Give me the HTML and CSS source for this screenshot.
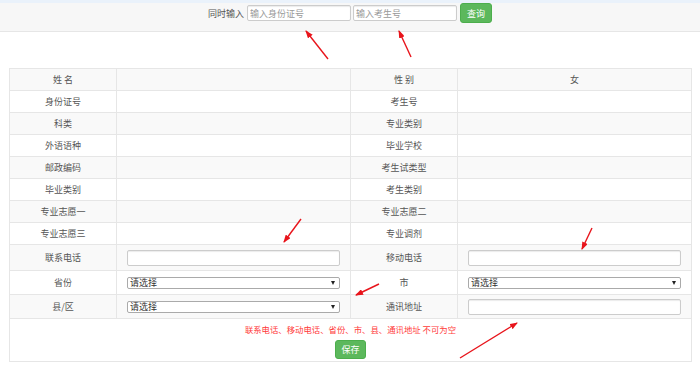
FILE: index.html
```html
<!DOCTYPE html>
<html lang="zh-CN">
<head>
    <meta charset="UTF-8">
    <meta name="viewport" content="width=device-width, initial-scale=1.0">
    <title>考生信息</title>
    <link rel="stylesheet" href="styles.css">
</head>
<body>

    <!-- Search Bar -->
    <div class="search-bar">
        <span class="search-label">同时输入</span>
        <input type="text" class="search-input" placeholder="输入身份证号">
        <input type="text" class="search-input" placeholder="输入考生号">
        <button type="button" class="btn-green btn-query">查询</button>
    </div>

    <table class="info-table">
        <colgroup>
            <col class="col-label">
            <col class="col-value">
            <col class="col-label">
            <col class="col-value">
        </colgroup>
        <tr class="row-gray">
            <td class="label">姓 名</td>
            <td></td>
            <td class="label">性 别</td>
            <td class="label">女</td>
        </tr>
        <tr>
            <td class="label">身份证号</td>
            <td></td>
            <td class="label">考生号</td>
            <td></td>
        </tr>
        <tr class="row-gray">
            <td class="label">科类</td>
            <td></td>
            <td class="label">专业类别</td>
            <td></td>
        </tr>
        <tr>
            <td class="label">外语语种</td>
            <td></td>
            <td class="label">毕业学校</td>
            <td></td>
        </tr>
        <tr class="row-gray">
            <td class="label">邮政编码</td>
            <td></td>
            <td class="label">考生试类型</td>
            <td></td>
        </tr>
        <tr>
            <td class="label">毕业类别</td>
            <td></td>
            <td class="label">考生类别</td>
            <td></td>
        </tr>
        <tr class="row-gray">
            <td class="label">专业志愿一</td>
            <td></td>
            <td class="label">专业志愿二</td>
            <td></td>
        </tr>
        <tr>
            <td class="label">专业志愿三</td>
            <td></td>
            <td class="label">专业调剂</td>
            <td></td>
        </tr>
        <tr class="row-gray row-tall">
            <td class="label">联系电话</td>
            <td class="field"><input type="text" class="text-input"></td>
            <td class="label">移动电话</td>
            <td class="field"><input type="text" class="text-input"></td>
        </tr>
        <tr class="row-mid">
            <td class="label">省份</td>
            <td class="field">
                <div class="select-wrap"><select class="select-box"><option>请选择</option></select></div>
            </td>
            <td class="label">市</td>
            <td class="field">
                <div class="select-wrap"><select class="select-box"><option>请选择</option></select></div>
            </td>
        </tr>
        <tr class="row-gray row-mid">
            <td class="label">县/区</td>
            <td class="field">
                <div class="select-wrap"><select class="select-box"><option>请选择</option></select></div>
            </td>
            <td class="label">通讯地址</td>
            <td class="field"><input type="text" class="text-input"></td>
        </tr>
        <tr class="row-submit">
            <td colspan="4">
                <div class="warn">联系电话、移动电话、省份、市、县、通讯地址 不可为空</div>
                <button type="button" class="btn-green btn-save">保存</button>
            </td>
        </tr>
    </table>

    <!-- annotation arrows -->
    <svg class="arrows" width="700" height="386" viewBox="0 0 700 386">
        <defs>
            <marker id="head" markerWidth="8" markerHeight="6" refX="7" refY="3" orient="auto" markerUnits="userSpaceOnUse">
                <path d="M0 0 L8 3 L0 6 Z" fill="#e8141b"/>
            </marker>
        </defs>
        <g stroke="#e8141b" stroke-width="1.4" marker-end="url(#head)">
            <line x1="328" y1="59" x2="306" y2="31"/>
            <line x1="411" y1="57" x2="399" y2="31"/>
            <line x1="301" y1="219" x2="284" y2="242"/>
            <line x1="592" y1="228" x2="582" y2="249"/>
            <line x1="379" y1="284" x2="356" y2="295"/>
            <line x1="460" y1="358" x2="517" y2="323"/>
        </g>
    </svg>

</body>
</html>
```

FILE: styles.css
```css
* {
    margin: 0;
    padding: 0;
    box-sizing: border-box;
    font-family: "Noto Sans CJK SC", "Liberation Sans", sans-serif;
}

body {
    background: #fff;
    color: #555;
    font-size: 9px;
    position: relative;
    width: 700px;
    height: 386px;
    overflow: hidden;
}

/* Search bar */
.search-bar {
    background: #f7f7f7;
    border-top: 3px solid #eaf2fb;
    border-bottom: 1px solid #e6e6e6;
    height: 32px;
    padding-bottom: 8px;
    display: flex;
    justify-content: center;
    align-items: center;
    gap: 2px;
}

.search-label {
    color: #555;
    font-size: 9px;
    margin-right: 1px;
}

.search-input {
    width: 104px;
    height: 16px;
    border: 1px solid #ccc;
    border-radius: 2px;
    padding: 0 2px;
    font-size: 9px;
    color: #555;
    box-shadow: inset 0 1px 1px rgba(0, 0, 0, 0.08);
}

.search-input::placeholder {
    color: #999;
}

.btn-green {
    background: #5cb85c;
    color: #fff;
    border: 1px solid #4cae4c;
    border-radius: 3px;
    font-size: 9px;
    cursor: pointer;
}

.btn-query {
    width: 32px;
    height: 20px;
    margin-left: 1px;
}

/* Info table */
.info-table {
    margin: 36px 0 0 9px;
    width: 682px;
    border-collapse: collapse;
    table-layout: fixed;
    border: 1px solid #e2e2e2;
}

.col-label {
    width: 107px;
}

.col-value {
    width: 234px;
}

.info-table td {
    border: 1px solid #e6e6e6;
    height: 22px;
    padding: 0 10px;
    vertical-align: middle;
}

.info-table .label {
    text-align: center;
    color: #555;
}

.row-gray td {
    background: #f9f9f9;
}

.row-tall td {
    height: 26px;
}

.row-mid td {
    height: 24px;
}

.text-input {
    display: block;
    width: 100%;
    height: 16px;
    border: 1px solid #ccc;
    border-radius: 2px;
    background: #fff;
    box-shadow: inset 0 1px 1px rgba(0, 0, 0, 0.08);
}

.select-wrap {
    position: relative;
}

.select-box {
    display: block;
    width: 100%;
    height: 12px;
    border: 1px solid #aaa;
    border-radius: 2px;
    background: #fff;
    color: #333;
    font-size: 9px;
    line-height: 10px;
    padding: 0 2px;
    appearance: none;
    -webkit-appearance: none;
}

.select-wrap::after {
    content: "";
    position: absolute;
    right: 5px;
    top: 4px;
    border-left: 2px solid transparent;
    border-right: 2px solid transparent;
    border-top: 4px solid #222;
}

.row-submit td {
    height: 43px;
    text-align: center;
    padding-top: 1px;
}

.warn {
    color: #ff3b3b;
    font-size: 8.4px;
    line-height: 12px;
}

.btn-save {
    width: 31px;
    height: 19px;
    margin-top: 5px;
}

.arrows {
    position: absolute;
    left: 0;
    top: 0;
    pointer-events: none;
}
```
